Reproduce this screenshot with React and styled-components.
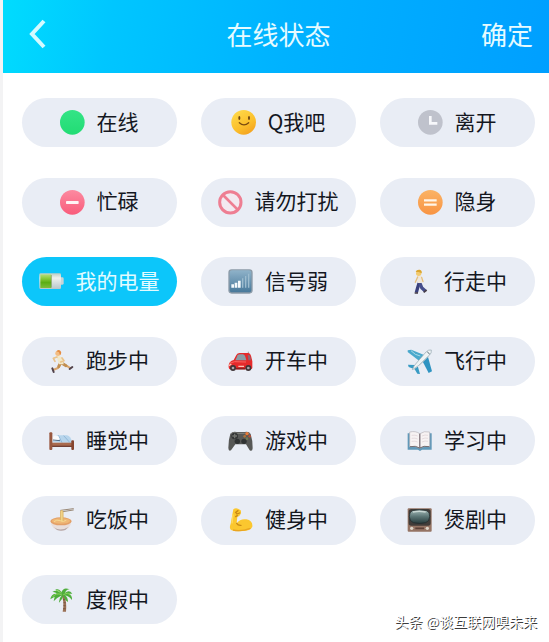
import React, { useState } from 'react';
import styled, { createGlobalStyle } from 'styled-components';

const GlobalStyle = createGlobalStyle`
  * {
    box-sizing: border-box;
  }

  body {
    margin: 0;
    background: #ffffff;
    font-family: 'Noto Sans CJK SC', 'Noto Sans', sans-serif;
  }

  button {
    font-family: inherit;
    border: none;
    cursor: pointer;
  }
`;

const Page = styled.div`
  position: relative;
  display: flex;
  flex-direction: column;
  min-height: 100vh;
  border-left: 3px solid #f3f3f4;
`;

const Header = styled.header`
  display: grid;
  grid-template-columns: 1fr auto 1fr;
  align-items: center;
  height: 73px;
  padding: 0 14px 5px 19px;
  background: linear-gradient(100deg, #00dcfe 0%, #00c6ff 20%, #00b2ff 52%, #009fff 100%);
`;

const Title = styled.h1`
  margin: 0;
  color: #e6fbff;
  font-size: 26px;
  line-height: 32px;
  font-weight: 400;
`;

const BackButton = styled.button`
  display: flex;
  justify-self: start;
  padding: 0 7px;
  background: none;
`;

const ConfirmButton = styled.button`
  justify-self: end;
  padding: 0 2px;
  background: none;
  color: #e6fbff;
  font-size: 26px;
  line-height: 32px;
`;

const StatusGrid = styled.main`
  flex: 1;
  display: grid;
  grid-template-columns: repeat(3, 1fr);
  grid-auto-rows: 49px;
  align-content: space-between;
  column-gap: 24px;
  row-gap: 12px;
  padding: 25px 14px 18px 19px;
`;

const StatusButton = styled.button`
  display: flex;
  align-items: center;
  justify-content: center;
  gap: 12px;
  padding: 0 1px 0 0;
  border-radius: 25px;
  background: ${({ $active }) => ($active ? '#0cc6fa' : '#e9edf5')};
  color: ${({ $active }) => ($active ? '#e2fbff' : '#14171f')};
  font-size: 21px;
  line-height: 28px;
  white-space: nowrap;
`;

const StatusLabel = styled.span`
  padding-bottom: 4px;
`;

const Icon = styled.svg`
  width: 25px;
  height: 25px;
  flex: none;
`;

const Watermark = styled.div`
  position: absolute;
  right: 12px;
  bottom: 11px;
  color: #ffffff;
  font-size: 14px;
  line-height: 20px;
  text-shadow: 1px 1px 0 #3c3c3c;
`;

const OnlineIcon = () => (
  <>
    <defs>
      <linearGradient id="online" x1="0" y1="0" x2="0" y2="1">
        <stop offset="0" stopColor="#34e486" />
        <stop offset="1" stopColor="#22dc74" />
      </linearGradient>
    </defs>
    <circle cx="37" cy="37" r="37" fill="url(#online)" />
  </>
);

const SmileIcon = () => (
  <>
    <defs>
      <linearGradient id="smile" x1="0.2" y1="0" x2="0.8" y2="1">
        <stop offset="0" stopColor="#ffd94a" />
        <stop offset="0.6" stopColor="#fbbf2b" />
        <stop offset="1" stopColor="#f39f1f" />
      </linearGradient>
    </defs>
    <circle cx="38" cy="37" r="37" fill="url(#smile)" />
    <ellipse cx="25" cy="24" rx="3" ry="6" fill="#6b4410" />
    <ellipse cx="54" cy="24" rx="3" ry="6" fill="#6b4410" />
    <path d="M25 38q14 13 28 0" fill="none" stroke="#7a4b10" strokeWidth="4" strokeLinecap="round" />
  </>
);

const AwayIcon = () => (
  <>
    <circle cx="37" cy="37" r="37" fill="#bfc2cc" />
    <path d="M37 18v22h21" fill="none" stroke="#f7f8fb" strokeWidth="8" />
  </>
);

const BusyIcon = () => (
  <>
    <defs>
      <linearGradient id="busy" x1="0" y1="0" x2="0" y2="1">
        <stop offset="0" stopColor="#fc8aa0" />
        <stop offset="1" stopColor="#f95c7b" />
      </linearGradient>
    </defs>
    <circle cx="37" cy="37" r="37" fill="url(#busy)" />
    <rect x="18" y="33" width="38" height="9" rx="2" fill="#fff4f5" />
  </>
);

const DisturbIcon = () => (
  <>
    <circle cx="37" cy="37" r="32" fill="#f3e9f0" stroke="#ee7e92" strokeWidth="9" />
    <path d="M15 15l44 44" stroke="#ee7e92" strokeWidth="8" />
  </>
);

const InvisibleIcon = () => (
  <>
    <defs>
      <linearGradient id="invisible" x1="0" y1="0" x2="0" y2="1">
        <stop offset="0" stopColor="#fbb365" />
        <stop offset="1" stopColor="#f89443" />
      </linearGradient>
    </defs>
    <circle cx="37" cy="37" r="37" fill="url(#invisible)" />
    <path d="M18 31h38M18 44h38" stroke="#fff5e8" strokeWidth="7" />
  </>
);

const BatteryIcon = () => (
  <>
    <defs>
      <linearGradient id="batteryFill" x1="0" y1="0" x2="0" y2="1">
        <stop offset="0" stopColor="#b6dc7c" />
        <stop offset="0.3" stopColor="#8acb3c" />
        <stop offset="0.6" stopColor="#5bae14" />
        <stop offset="1" stopColor="#7dbd3c" />
      </linearGradient>
      <linearGradient id="batteryCase" x1="0" y1="0" x2="0" y2="1">
        <stop offset="0" stopColor="#b9cdc4" />
        <stop offset="0.3" stopColor="#eef1ee" />
        <stop offset="1" stopColor="#b7c6cb" />
      </linearGradient>
    </defs>
    <rect x="63" y="25" width="11" height="22" rx="4" fill="#c8d4d8" />
    <rect x="1" y="13" width="65" height="47" rx="4" fill="url(#batteryCase)" />
    <rect x="4" y="16" width="33" height="41" fill="url(#batteryFill)" />
    <path d="M37 18v37" stroke="#7f9a62" strokeWidth="2" />
  </>
);

const SignalIcon = () => (
  <>
    <defs>
      <linearGradient id="signal" x1="0" y1="0" x2="0" y2="1">
        <stop offset="0" stopColor="#8fb2c9" />
        <stop offset="1" stopColor="#47789a" />
      </linearGradient>
    </defs>
    <rect x="1" y="1" width="73" height="73" rx="10" fill="#8c9ba8" />
    <rect x="5" y="4" width="65" height="66" rx="8" fill="url(#signal)" />
    <path d="M44 56V28M53 56V21M62 56V14" stroke="#9dbccf" strokeWidth="4" />
    <path d="M14 56V46M24 56V41M34 56V35" stroke="#f4f9fc" strokeWidth="8" />
  </>
);

const WalkIcon = () => (
  <>
    <path d="M37 40l-5 16-4 15" fill="none" stroke="#39407c" strokeWidth="10" strokeLinejoin="round" />
    <path d="M38 41l6 15 10 9" fill="none" stroke="#454e8c" strokeWidth="10" strokeLinejoin="round" />
    <path d="M23 72h10M50 70l9-7" stroke="#453c47" strokeWidth="5" />
    <path d="M31 20q8-4 13 2l2 20H31z" fill="#eee7dc" />
    <path d="M32 24l-7 16M44 25l4 13" fill="none" stroke="#e6bf7b" strokeWidth="4" strokeLinecap="round" />
    <circle cx="35" cy="13" r="8" fill="#f2ca70" />
    <path d="M26 9q2-8 12-7 8 2 6 11l-9-4z" fill="#dba62e" />
  </>
);

const RunIcon = () => (
  <>
    <path d="M35 45l-8 12-15 6M38 44l14 6 13 8" fill="none" stroke="#d8a66f" strokeWidth="6" strokeLinejoin="round" />
    <path d="M34 42l-5 11M38 42l13 8" stroke="#c18e50" strokeWidth="9" strokeLinecap="round" />
    <path d="M10 58l4 11M62 60l8-6" stroke="#51424a" strokeWidth="6" strokeLinecap="round" />
    <path d="M22 21q10-3 19 7l3 18H30z" fill="#f1e8c9" />
    <path d="M24 24l-11 4 5 9M39 27l6 8-10 4" fill="none" stroke="#eac38b" strokeWidth="5" strokeLinecap="round" strokeLinejoin="round" />
    <circle cx="27" cy="13" r="8" fill="#f3bd83" />
    <path d="M22 7q9-8 14 1 2 6-3 11l-3-9z" fill="#e58d43" />
  </>
);

const CarIcon = () => (
  <>
    <path d="M61 16V8" stroke="#777" strokeWidth="2" />
    <path d="M2 49q1-12 15-16l8-15q3-6 10-6h26q6 0 8 8l4 17v20q-1 4-6 4H6q-5-1-4-12z" fill="#e52a2b" />
    <path d="M22 34l7-15q2-3 7-3h9q5 1 7 7l3 11z" fill="#8a9da6" />
    <path d="M59 18h4q3 1 4 5l2 11h-8z" fill="#8f6572" />
    <path d="M4 43l16-5 34 1" fill="none" stroke="#fa6560" strokeWidth="3" />
    <path d="M3 50l7-5M31 52h17" stroke="#f8c7b8" strokeWidth="4" />
    <path d="M24 59h27" stroke="#892020" strokeWidth="5" />
    <circle cx="15" cy="57" r="9" fill="#403437" />
    <circle cx="15" cy="57" r="4" fill="#aaa6a9" />
    <circle cx="61" cy="57" r="9" fill="#403437" />
    <circle cx="61" cy="57" r="4" fill="#aaa6a9" />
  </>
);

const PlaneIcon = () => (
  <>
    <path d="M2 9V4l11-2 44 18-16 19z" fill="#4aa8cc" />
    <path d="M45 34l17-14 13 47-10 5z" fill="#2f94c2" />
    <path d="M3 47l20 1 10 6 6 21-8-1-8-13-18-7z" fill="#389bc4" />
    <path d="M12 5l13 11 15 5" fill="none" stroke="#a8dae7" strokeWidth="3" />
    <path d="M16 62q3-11 15-23l26-30Q65 1 73 3q2 9-7 17L34 50Q22 61 16 62z" fill="#eef3f5" stroke="#91a4ad" strokeWidth="2" />
    <path d="M61 9l7 6" stroke="#53636f" strokeWidth="3" />
    <path d="M20 59q17-7 43-37" fill="none" stroke="#b6c6ce" strokeWidth="3" />
  </>
);

const BedIcon = () => (
  <>
    <path d="M10 43q5-21 16-21h28q12 2 16 23z" fill="#b7d5ec" />
    <path d="M28 22l11 22M44 23l18 20" stroke="#91b7d7" strokeWidth="3" />
    <path d="M11 28q6-9 17-4l4 9q-5 7-19 6z" fill="#fafbfc" />
    <path d="M12 36l21 2" stroke="#526e88" strokeWidth="3" />
    <path d="M5 44h66v11H5z" fill="#a96a4d" />
    <path d="M6 55h65" stroke="#713f34" strokeWidth="4" />
    <rect x="1" y="13" width="9" height="53" rx="3" fill="#99583f" />
    <rect x="67" y="37" width="8" height="29" rx="3" fill="#86452f" />
  </>
);

const NoodleIcon = () => (
  <>
    <path d="M35 7l38-5M35 12l38-6" stroke="#998876" strokeWidth="3" strokeLinecap="round" />
    <path d="M5 40q2 28 31 28t31-28z" fill="#e8dedb" />
    <path d="M15 58q19 14 43-1l-9 9q-13 5-25 0z" fill="#b4a6a8" />
    <ellipse cx="36" cy="40" rx="32" ry="12" fill="#e3a068" />
    <ellipse cx="36" cy="39" rx="27" ry="8" fill="#efb775" />
    <path d="M35 40V10q4-7 7 1v29" fill="#f5d98e" stroke="#dcb465" strokeWidth="3" />
    <path d="M15 41q8-8 18-3t19-1" fill="none" stroke="#f6d993" strokeWidth="3" />
  </>
);

const GameIcon = () => (
  <>
    <path d="M7 17q7-8 19-5h24q13-3 18 6 7 22 6 43-1 11-9 6L54 49H22L9 67Q2 72 1 60q0-25 6-43z" fill="#575856" />
    <path d="M10 17q7-5 17-1h22q12-3 16 2" fill="none" stroke="#85857f" strokeWidth="3" />
    <circle cx="20" cy="24" r="10" fill="#343636" />
    <path d="M20 17v14M13 24h14" stroke="#71736e" strokeWidth="4" />
    <circle cx="28" cy="40" r="8" fill="#303333" />
    <circle cx="48" cy="40" r="8" fill="#303333" />
    <circle cx="57" cy="17" r="5" fill="#eb7937" />
    <circle cx="65" cy="25" r="4" fill="#b94e34" />
    <circle cx="50" cy="25" r="4" fill="#ad7138" />
    <circle cx="57" cy="32" r="4" fill="#707b52" />
  </>
);

const MuscleIcon = () => (
  <>
    <path d="M16 4q6-5 14-2l8 5q3 8-2 14-2 5-8 5l-2 20q11-15 29-12 20 4 18 22-6 13-29 13-22 2-33-2Q2 63 8 47z" fill="#fbc72f" />
    <path d="M15 66q25 5 52-5" fill="none" stroke="#e9a522" strokeWidth="4" />
    <path d="M26 46q4 7 13 6M30 8l-7 5 4 5 8-3M23 26l5-3" fill="none" stroke="#c98a18" strokeWidth="4" strokeLinecap="round" />
    <path d="M15 19l-3 27" stroke="#ffda60" strokeWidth="4" />
  </>
);

const BookIcon = () => (
  <>
    <path d="M2 16h8v40h26l3 4 3-4h24V16h8v49H45l-6 4-6-4H2z" fill="#6098b8" />
    <path d="M8 12q19-4 30 5v43q-12-7-30-4zM39 17q12-9 29-5v44q-18-3-29 4z" fill="#f7f3f3" stroke="#b3b0b6" strokeWidth="2" />
    <path d="M38 17v44" stroke="#8e8389" strokeWidth="4" />
    <path d="M14 22q11-2 18 2M14 31q11-2 18 2M14 40q11-2 18 2M45 24q9-5 18-2M45 33q9-5 18-2M45 42q9-5 18-2" fill="none" stroke="#dccfd3" strokeWidth="2" />
    <path d="M9 56q17-4 29 4 12-8 29-4" fill="none" stroke="#766f73" strokeWidth="3" />
  </>
);

const TvIcon = () => (
  <>
    <defs>
      <linearGradient id="screen" x1="0" y1="0" x2="0" y2="1">
        <stop offset="0" stopColor="#a3b9b7" />
        <stop offset="0.5" stopColor="#5a7474" />
        <stop offset="1" stopColor="#273b3c" />
      </linearGradient>
    </defs>
    <rect x="2" y="1" width="72" height="70" rx="3" fill="#957464" />
    <rect x="5" y="3" width="66" height="50" rx="8" fill="#413c39" />
    <path d="M16 8q21-5 43 0 10 4 9 18-1 15-12 18-18 5-37 0Q8 40 7 26 7 12 16 8z" fill="url(#screen)" stroke="#202728" strokeWidth="2" />
    <path d="M18 12q18-4 38 0" fill="none" stroke="#cad8d5" strokeWidth="4" />
    <circle cx="14" cy="61" r="5" fill="#ded6c9" />
    <circle cx="61" cy="61" r="5" fill="#ded6c9" />
    <path d="M25 61h26" stroke="#5c4137" strokeWidth="5" />
  </>
);

const PalmIcon = () => (
  <>
    <path d="M37 24q10 18 4 50h10q3-29-6-50z" fill="#9a7055" />
    <path d="M42 38h7M43 47h7M43 56h7M42 65h8" stroke="#6d4b3d" strokeWidth="2" />
    <path d="M39 24Q26 5 10 15q9-1 14 5Q6 19 4 37l13-8-3 14q13-13 25-18-10 9-9 22 11-9 13-22 2 13 14 20 0-13-9-20 14 3 20 14 4-12-8-19h10Q60 7 48 18q3-10 14-11Q43-1 38 15 28 3 18 7q14 4 21 17z" fill="#4fae3c" />
    <path d="M38 23q-17-7-27 7M43 23q13-9 21 0M38 18q-9-8-17-8" fill="none" stroke="#8bd45b" strokeWidth="3" />
  </>
);

const statuses = [
  { label: '在线', Drawing: OnlineIcon },
  { label: 'Q我吧', Drawing: SmileIcon },
  { label: '离开', Drawing: AwayIcon },
  { label: '忙碌', Drawing: BusyIcon },
  { label: '请勿打扰', Drawing: DisturbIcon },
  { label: '隐身', Drawing: InvisibleIcon },
  { label: '我的电量', Drawing: BatteryIcon },
  { label: '信号弱', Drawing: SignalIcon },
  { label: '行走中', Drawing: WalkIcon },
  { label: '跑步中', Drawing: RunIcon },
  { label: '开车中', Drawing: CarIcon },
  { label: '飞行中', Drawing: PlaneIcon },
  { label: '睡觉中', Drawing: BedIcon },
  { label: '游戏中', Drawing: GameIcon },
  { label: '学习中', Drawing: BookIcon },
  { label: '吃饭中', Drawing: NoodleIcon },
  { label: '健身中', Drawing: MuscleIcon },
  { label: '煲剧中', Drawing: TvIcon },
  { label: '度假中', Drawing: PalmIcon },
];

const App = () => {
  const [selected, setSelected] = useState('我的电量');

  return (
    <Page lang="zh-CN">
      <GlobalStyle />
      <Header>
        <BackButton type="button" aria-label="返回">
          <svg width="18" height="30" viewBox="0 0 18 30" fill="none">
            <path d="M15 2L3 15l12 13" stroke="#d4faff" strokeWidth="4" />
          </svg>
        </BackButton>
        <Title>在线状态</Title>
        <ConfirmButton type="button">确定</ConfirmButton>
      </Header>

      <StatusGrid>
        {statuses.map(({ label, Drawing }) => (
          <StatusButton
            key={label}
            type="button"
            $active={selected === label}
            aria-pressed={selected === label}
            onClick={() => setSelected(label)}
          >
            <Icon viewBox="0 0 75 75" aria-hidden="true">
              <Drawing />
            </Icon>
            <StatusLabel>{label}</StatusLabel>
          </StatusButton>
        ))}
      </StatusGrid>

      <Watermark>头条 @谈互联网嗅未来</Watermark>
    </Page>
  );
};

export default App;
